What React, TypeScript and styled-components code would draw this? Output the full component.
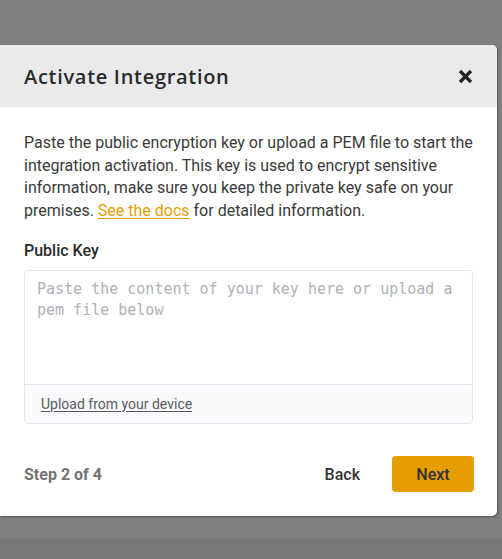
import React from "react";
import styled, { createGlobalStyle } from "styled-components";

const GlobalStyle = createGlobalStyle`
  html, body {
    margin: 0;
    padding: 0;
    height: 559px;
    overflow: hidden;
  }
  body {
    background: linear-gradient(to bottom, #808080 0, #808080 539px, #787878 539px, #787878 100%);
    font-family: Roboto, "Noto Sans", Arial, sans-serif;
  }
  * { box-sizing: border-box; }
`;

const Backdrop = styled.div`
  padding-top: 45px;
`;

const Modal = styled.div`
  width: 497px;
  background: #ffffff;
  border-radius: 0 5px 5px 0;
  box-shadow: 1px 1px 2px rgba(0, 0, 0, 0.35);
  overflow: hidden;
  display: flex;
  flex-direction: column;
`;

const Header = styled.div`
  height: 62px;
  background: #e9eaec;
  display: flex;
  align-items: center;
  justify-content: space-between;
  padding: 0 24px;
`;

const Title = styled.h2`
  margin: 0;
  font-family: "Open Sans", Lato, sans-serif;
  font-weight: 600;
  font-size: 20px;
  color: #2b2b2b;
  letter-spacing: 0.7px;
`;

const CloseButton = styled.button`
  border: none;
  background: none;
  padding: 0;
  width: 15px;
  height: 15px;
  display: flex;
  align-items: center;
  justify-content: center;
  margin-top: 1px;
  cursor: pointer;
`;

const Body = styled.div`
  padding: 25px 24px 0;
  display: flex;
  flex-direction: column;
`;

const Description = styled.p`
  margin: 0 0 17px;
  font-size: 16px;
  line-height: 22.5px;
  color: #3a3a3a;
`;

const DocLink = styled.a`
  color: #e69c03;
  text-decoration: underline;
  text-underline-offset: 2px;
`;

const Label = styled.label`
  font-size: 16px;
  font-weight: 500;
  line-height: 24px;
  color: #2b2b2b;
  margin-bottom: 7px;
`;

const KeyBox = styled.div`
  border: 1px solid #e4e5e9;
  border-radius: 4px;
  display: flex;
  flex-direction: column;
  overflow: hidden;
`;

const KeyArea = styled.textarea`
  height: 113px;
  border: none;
  resize: none;
  outline: none;
  padding: 8px 12px;
  font-family: "DejaVu Sans Mono", "Liberation Mono", monospace;
  font-size: 15px;
  line-height: 21px;
  color: #333;
  &::placeholder {
    color: #b0b0ba;
  }
`;

const KeyFooter = styled.div`
  height: 39px;
  border-top: 1px solid #e4e5e9;
  background: #f9fafb;
  display: flex;
  align-items: center;
  padding: 0 16px;
`;

const UploadLink = styled.a`
  font-size: 14px;
  color: #5a5a62;
  text-decoration: underline;
  text-underline-offset: 2px;
  cursor: pointer;
`;

const Footer = styled.div`
  padding: 32px 23px 24px 24px;
  display: flex;
  align-items: center;
  justify-content: space-between;
`;

const StepText = styled.span`
  font-size: 16px;
  font-weight: 700;
  color: #737373;
`;

const Actions = styled.div`
  display: flex;
  align-items: center;
  gap: 16px;
`;

const Button = styled.button<{ $primary?: boolean }>`
  height: 36px;
  padding: 0 ${(p) => (p.$primary ? "24px" : "16px")};
  width: ${(p) => (p.$primary ? "82px" : "auto")};
  border: none;
  border-radius: 4px;
  background: ${(p) => (p.$primary ? "#e69c03" : "transparent")};
  font-family: Roboto, sans-serif;
  font-size: 16px;
  font-weight: 500;
  color: #333;
  cursor: pointer;
`;

export default function App() {
  return (
    <>
      <GlobalStyle />
      <Backdrop>
        <Modal>
          <Header>
            <Title>Activate Integration</Title>
            <CloseButton aria-label="Close">
              <svg width="15" height="15" viewBox="0 0 15 15">
                <path d="M2 2 L13 13 M13 2 L2 13" stroke="#222" strokeWidth="3.2" strokeLinecap="butt" />
              </svg>
            </CloseButton>
          </Header>
          <Body>
            <Description>
              Paste the public encryption key or upload a PEM file to start the
              integration activation. This key is used to encrypt sensitive
              information, make sure you keep the private key safe on your
              premises. <DocLink href="#">See the docs</DocLink> for detailed information.
            </Description>
            <Label>Public Key</Label>
            <KeyBox>
              <KeyArea placeholder="Paste the content of your key here or upload a pem file below" />
              <KeyFooter>
                <UploadLink>Upload from your device</UploadLink>
              </KeyFooter>
            </KeyBox>
          </Body>
          <Footer>
            <StepText>Step 2 of 4</StepText>
            <Actions>
              <Button>Back</Button>
              <Button $primary>Next</Button>
            </Actions>
          </Footer>
        </Modal>
      </Backdrop>
    </>
  );
}
